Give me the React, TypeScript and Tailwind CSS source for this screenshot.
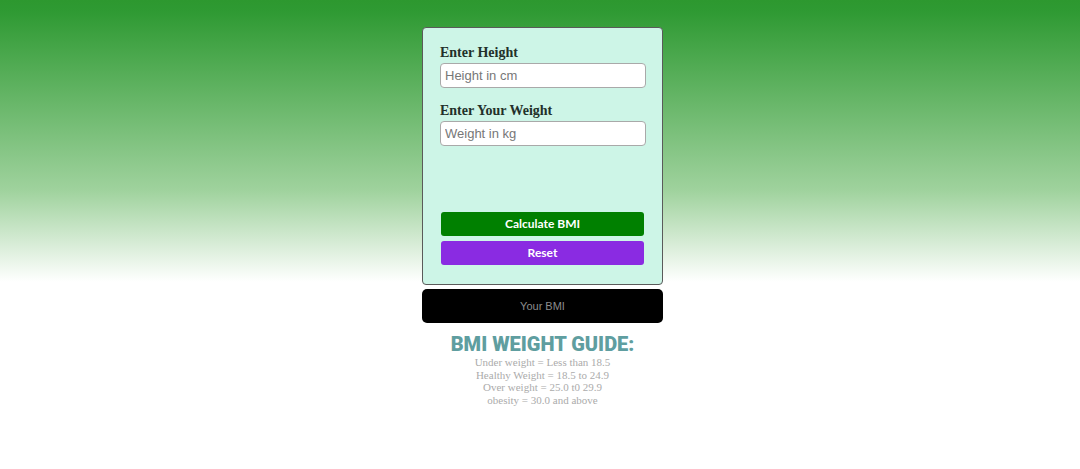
import { useState } from "react";

export default function App() {
  const [height, setHeight] = useState("");
  const [weight, setWeight] = useState("");

  return (
    <div className="min-h-[469px] w-full bg-[linear-gradient(180deg,#2d982f_0px,#2f9a33_12px,#9fd29d_190px,#ffffff_282px,#ffffff_100%)] bg-no-repeat">
      <div className="flex flex-col items-center pt-[27px] pl-[5px]">
        {/* Form card */}
        <div className="w-[241px] h-[258px] rounded-[4px] border border-[#5a5a5a] bg-[#cdf5e7] px-[17px] pt-[15px] flex flex-col">
          <label className="font-['Liberation_Serif',serif] font-bold text-[14px] leading-[19px] text-[#22302a]">
            Enter Height
          </label>
          <input
            value={height}
            onChange={(e) => setHeight(e.target.value)}
            placeholder="Height in cm"
            className="mt-[1px] h-[25px] w-[206px] rounded-[4px] border border-[#a9a9a9] bg-white px-[4px] font-['Liberation_Sans',Arial,sans-serif] text-[13px] text-[#333] placeholder:text-[#777] outline-none"
          />
          <label className="mt-[13px] font-['Liberation_Serif',serif] font-bold text-[14px] leading-[19px] text-[#22302a]">
            Enter Your Weight
          </label>
          <input
            value={weight}
            onChange={(e) => setWeight(e.target.value)}
            placeholder="Weight in kg"
            className="mt-[1px] h-[25px] w-[206px] rounded-[4px] border border-[#a9a9a9] bg-white px-[4px] font-['Liberation_Sans',Arial,sans-serif] text-[13px] text-[#333] placeholder:text-[#777] outline-none"
          />
          <div className="mt-[66px] flex flex-col gap-[5px] pl-[1px]">
            <button className="h-[24px] w-[203px] rounded-[3px] bg-[#008000] font-['Lato',sans-serif] text-[12px] font-bold text-white">
              Calculate BMI
            </button>
            <button
              onClick={() => {
                setHeight("");
                setWeight("");
              }}
              className="h-[24px] w-[203px] rounded-[3px] bg-[#8a2be2] font-['Lato',sans-serif] text-[12px] font-bold text-white"
            >
              Reset
            </button>
          </div>
        </div>

        {/* Result */}
        <div className="mt-[4px] flex h-[34px] w-[241px] items-center justify-center rounded-[5px] bg-black font-['Liberation_Sans',Arial,sans-serif] text-[11px] text-[#8c8c8c]">
          Your BMI
        </div>

        {/* Guide */}
        <h2 className="mt-[9px] font-['Roboto',Arial,sans-serif] text-[20px] font-black leading-[24px] text-[#5f9ea0]">
          BMI WEIGHT GUIDE:
        </h2>
        <div className="flex flex-col items-center font-['Liberation_Serif',serif] text-[11px] leading-[12.7px] text-[#ababab]">
          <p>Under weight = Less than 18.5</p>
          <p>Healthy Weight = 18.5 to 24.9</p>
          <p>Over weight = 25.0 t0 29.9</p>
          <p>obesity = 30.0 and above</p>
        </div>
      </div>
    </div>
  );
}
